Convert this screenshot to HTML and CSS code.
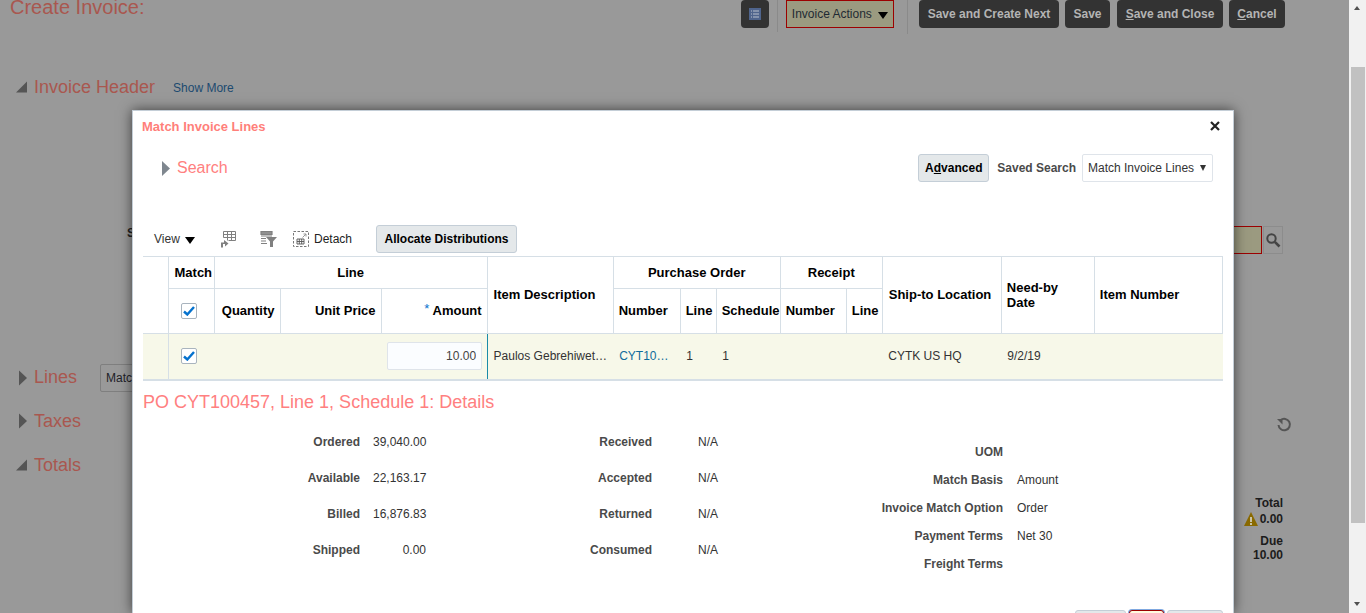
FILE: index.html
```html
<!DOCTYPE html>
<html lang="en">
<head>
  <meta charset="UTF-8">
  <meta name="viewport" content="width=device-width, initial-scale=1.0">
  <title>Create Invoice</title>
  <link rel="stylesheet" href="styles.css">
</head>
<body>
  <div class="page">
    <div class="page-bar">
      <h1 class="page-title">Create Invoice:</h1>
      <button class="dark-btn icon-btn" aria-label="Views">
        <svg width="12" height="12" viewBox="0 0 12 12"><rect width="12" height="12" fill="#4f648c"/><path d="M2 3h1M4 3h6M2 6h1M4 6h6M2 9h1M4 9h6" stroke="#b9c0cc" stroke-width="1.2"/></svg>
      </button>
      <span class="bar-sep"></span>
      <button class="actions-btn">Invoice Actions <span class="caret"></span></button>
      <span class="bar-sep sep-wide"></span>
      <button class="dark-btn btn-next">Save and Create Next</button>
      <button class="dark-btn btn-save">Save</button>
      <button class="dark-btn btn-close"><u>S</u>ave and Close</button>
      <button class="dark-btn btn-cancel"><u>C</u>ancel</button>
    </div>

    <div class="section-head head-invoice">
      <svg class="tri" width="24" height="12" viewBox="0 0 24 12"><path d="M6 11.500L17 11.500V0.500Z" fill="#555"/></svg>
      <h2>Invoice Header</h2>
      <a class="show-more">Show More</a>
    </div>

    <div class="search-row">
      <strong class="search-label">S</strong>
      <div class="search-field">
        <span class="search-input"></span>
        <span class="search-btn">
          <svg width="16" height="16" viewBox="0 0 16 16"><circle cx="6.500" cy="6.500" r="4.200" fill="none" stroke="#444" stroke-width="2"/><path d="M9.800 9.800L14.500 14.500" stroke="#444" stroke-width="2.600"/></svg>
        </span>
      </div>
    </div>

    <div class="section-head head-lines">
      <svg class="tri" width="24" height="16" viewBox="0 0 24 16"><path d="M9 0.500L17 8L9 15.500Z" fill="#555"/></svg>
      <h2>Lines</h2>
      <button class="match-btn">Match</button>
    </div>

    <div class="section-head head-taxes">
      <svg class="tri" width="24" height="16" viewBox="0 0 24 16"><path d="M9 0.500L17 8L9 15.500Z" fill="#555"/></svg>
      <h2>Taxes</h2>
      <svg class="refresh" width="16" height="16" viewBox="0 0 16 16"><path d="M4.500 4.200A5.700 5.700 0 1 1 2.500 9" fill="none" stroke="#555" stroke-width="2"/><path d="M1 3H6.500V8.600Z" fill="#555"/></svg>
    </div>

    <div class="section-head head-totals">
      <svg class="tri" width="24" height="12" viewBox="0 0 24 12"><path d="M6 11.500L17 11.500V0.500Z" fill="#555"/></svg>
      <h2>Totals</h2>
    </div>

    <div class="summary">
      <div class="summary-total">
        <div>Total</div>
        <div class="summary-warn">
          <svg width="14" height="14" viewBox="0 0 14 14"><path d="M7 0L14 14H0Z" fill="#8a6a00"/><path d="M7 5v5M7 11v2" stroke="#c9c4a8" stroke-width="2"/></svg>
          0.00
        </div>
      </div>
      <div class="summary-due">
        <div>Due</div>
        <div>10.00</div>
      </div>
    </div>
  </div>

  <div class="scrollbar">
    <span class="arrow-up"></span>
    <span class="thumb"></span>
    <span class="arrow-down"></span>
  </div>

  <div class="dialog">
    <div class="dialog-title">
      <span class="dialog-name">Match Invoice Lines</span>
      <svg width="10" height="10" viewBox="0 0 10 10"><path d="M1 1L9 9M9 1L1 9" stroke="#222" stroke-width="2.200"/></svg>
    </div>

    <div class="dlg-search">
      <svg width="8" height="15" viewBox="0 0 8 15"><path d="M0 0L8 7.500L0 15Z" fill="#7f878f"/></svg>
      <span class="dlg-search-title">Search</span>
      <button class="light-btn btn-advanced">A<u>d</u>vanced</button>
      <span class="saved-label">Saved Search</span>
      <span class="saved-select">Match Invoice Lines <span class="small-caret"></span></span>
    </div>

    <div class="table-bar">
      <span class="view-menu">View <span class="caret"></span></span>
      <svg class="tool tool-freeze" width="16" height="17" viewBox="0 0 16 17"><path d="M3.500 0.500h12v9h-7M3.500 0.500v6M3.500 3.500h12M3.500 6.500h12M7.500 0.500v9M11.500 0.500v9" fill="none" stroke="#808080" stroke-width="1"/><path d="M1 16.500v-5h3V9l4.500 3.500L5 15.500V13H3v3.500Z" fill="#808080"/></svg>
      <svg class="tool tool-filter" width="17" height="16" viewBox="0 0 17 16"><path d="M1 0.500h11v3H1ZM1 5h11M1 7.500h5M1 10h5M1 12.500h6" fill="#909090" stroke="#808080" stroke-width="1.200"/><path d="M6 6h11l-4 4.500V16h-3v-5.500Z" fill="#808080"/></svg>
      <svg class="tool tool-detach" width="16" height="16" viewBox="0 0 16 16"><rect x="0.500" y="0.500" width="15" height="15" fill="none" stroke="#777" stroke-dasharray="2.500 1.500"/><path d="M9.500 6.500L13 3M10.500 3H13V5.500" fill="none" stroke="#999"/><path d="M4 8h7v5H4ZM4 10.500h7M6.300 8v5M8.700 8v5" fill="none" stroke="#555" stroke-width="0.900"/></svg>
      <span class="detach-label">Detach</span>
      <button class="light-btn btn-allocate">Allocate Distributions</button>
    </div>

    <table class="lines">
      <colgroup>
        <col class="w25"><col class="w46"><col class="w66"><col class="w101"><col class="w106">
        <col class="w126"><col class="w67"><col class="w36"><col class="w64"><col class="w66">
        <col class="w36"><col class="w119"><col class="w93"><col class="w128">
      </colgroup>
      <thead>
        <tr class="row-top">
          <th rowspan="2" class="blank"></th>
          <th class="wide-pad">Match</th>
          <th colspan="3" class="center">Line</th>
          <th rowspan="2" class="left wide-pad">Item Description</th>
          <th colspan="3" class="center">Purchase Order</th>
          <th colspan="2" class="center">Receipt</th>
          <th rowspan="2" class="left wide-pad">Ship-to Location</th>
          <th rowspan="2" class="left">Need-by<br>Date</th>
          <th rowspan="2" class="left">Item Number</th>
        </tr>
        <tr class="row-sub">
          <th class="check-cell"><span class="check"><svg width="12" height="10" viewBox="0 0 12 10"><path d="M1 5.500L4.300 8.500L11 1" fill="none" stroke="#0572ce" stroke-width="2.400"/></svg></span></th>
          <th class="right">Quantity</th>
          <th class="right">Unit Price</th>
          <th class="right"><span class="req">*</span> Amount</th>
          <th class="left">Number</th>
          <th class="left">Line</th>
          <th class="left tight">Schedule</th>
          <th class="left">Number</th>
          <th class="left">Line</th>
        </tr>
      </thead>
      <tbody>
        <tr class="row-data">
          <td></td>
          <td class="check-cell"><span class="check"><svg width="12" height="10" viewBox="0 0 12 10"><path d="M1 5.500L4.300 8.500L11 1" fill="none" stroke="#0572ce" stroke-width="2.400"/></svg></span></td>
          <td></td>
          <td></td>
          <td class="amount-cell"><input class="amount" type="text" value="10.00"></td>
          <td>Paulos Gebrehiwet…</td>
          <td class="link">CYT10…</td>
          <td>1</td>
          <td>1</td>
          <td></td>
          <td></td>
          <td>CYTK US HQ</td>
          <td>9/2/19</td>
          <td></td>
        </tr>
      </tbody>
    </table>

    <h3 class="detail-title">PO CYT100457, Line 1, Schedule 1: Details</h3>

    <div class="details">
      <div class="detail-group group-qty">
        <b>Ordered</b><span>39,040.00</span>
        <b>Available</b><span>22,163.17</span>
        <b>Billed</b><span>16,876.83</span>
        <b>Shipped</b><span>0.00</span>
      </div>
      <div class="detail-group group-recv">
        <b>Received</b><span>N/A</span>
        <b>Accepted</b><span>N/A</span>
        <b>Returned</b><span>N/A</span>
        <b>Consumed</b><span>N/A</span>
      </div>
      <div class="detail-group group-terms">
        <b>UOM</b><span></span>
        <b>Match Basis</b><span>Amount</span>
        <b>Invoice Match Option</b><span>Order</span>
        <b>Payment Terms</b><span>Net 30</span>
        <b>Freight Terms</b><span></span>
      </div>
    </div>

    <div class="dialog-foot">
      <button class="light-btn foot-apply" aria-label="Apply"></button>
      <button class="foot-ok" aria-label="OK"></button>
      <button class="light-btn foot-cancel" aria-label="Cancel"></button>
    </div>
  </div>
</body>
</html>
```

FILE: styles.css
```css
* {
  box-sizing: border-box;
}
html, body {
  height: 613px;
  overflow: hidden;
}
body {
  margin: 0;
  font-family: "Liberation Sans", Arial, sans-serif;
  font-size: 12px;
  color: #333;
  background-color: #999;
}
button {
  font-family: inherit;
  font-size: 12px;
  padding: 0;
  cursor: pointer;
}
h1, h2, h3 {
  margin: 0;
  font-weight: normal;
}

/* page behind the dialog */
.page {
  width: 1349px;
  height: 613px;
  padding: 0 64px 0 10px;
  overflow: hidden;
}
.page-bar {
  display: flex;
  align-items: flex-start;
  height: 28px;
}
.page-title {
  flex: 1;
  margin-top: -7px;
  font-size: 20px;
  line-height: 28px;
  color: #a9574f;
}
.dark-btn {
  height: 28px;
  padding: 0;
  border: 0;
  border-radius: 4px;
  background-color: #333;
  color: #b4b4b4;
  font-weight: bold;
  white-space: nowrap;
}
.icon-btn {
  display: flex;
  align-items: center;
  justify-content: center;
  width: 28px;
}
.bar-sep {
  width: 1px;
  height: 32px;
  margin: 0 8px;
  background-color: #8a8a8a;
}
.sep-wide {
  height: 34px;
  margin: 0 11px 0 13px;
}
.actions-btn {
  width: 108px;
  height: 28px;
  border: 1px solid #9c0000;
  background-color: #9b9a80;
  color: #1f2a33;
  white-space: nowrap;
}
.caret {
  display: inline-block;
  margin-left: 3px;
  border-top: 7px solid #000;
  border-left: 5px solid transparent;
  border-right: 5px solid transparent;
  vertical-align: -1px;
}
.btn-next {
  width: 140px;
}
.btn-save {
  width: 45px;
  margin-left: 6px;
}
.btn-close {
  width: 106px;
  margin-left: 7px;
}
.btn-cancel {
  width: 56px;
  margin-left: 6px;
}

.section-head {
  display: flex;
  align-items: center;
  height: 28px;
}
.section-head h2 {
  font-size: 18px;
  color: #a9574f;
}
.tri {
  flex: none;
}
.head-invoice {
  margin-top: 45px;
}
.show-more {
  margin: 2px 0 0 18px;
  color: #1c4a70;
}
.search-row {
  display: flex;
  justify-content: space-between;
  height: 28px;
  margin-top: 125px;
  padding-left: 117px;
  color: #222;
}
.search-field {
  display: flex;
  margin-right: 2px;
}
.search-input {
  width: 162px;
  height: 28px;
  border: 1px solid #9c0000;
  background-color: #9b9a80;
}
.search-btn {
  display: flex;
  align-items: center;
  justify-content: center;
  width: 20px;
  height: 28px;
  margin-left: 1px;
  border: 1px solid #8c8c8c;
}
.head-lines {
  margin-top: 110px;
}
.section-head.head-lines h2 {
  margin-top: -2px;
}
.match-btn {
  width: 60px;
  height: 28px;
  margin-left: 23px;
  padding-left: 5px;
  border: 1px solid #7f7f7f;
  border-radius: 2px;
  background: transparent;
  color: #1e2228;
  text-align: left;
}
.head-taxes {
  margin-top: 15px;
}
.refresh {
  margin-left: auto;
  margin-right: -7px;
  margin-top: 6px;
}
.head-totals {
  margin-top: 16px;
}
.summary {
  margin-top: 16px;
  margin-right: 2px;
  font-weight: bold;
  text-align: right;
  color: #1c1c1c;
}
.summary-total {
  line-height: 16px;
}
.summary-warn {
  display: flex;
  align-items: center;
  justify-content: flex-end;
  gap: 2px;
}
.summary-due {
  margin-top: 7px;
  line-height: 14px;
}

/* browser scrollbar */
.scrollbar {
  position: absolute;
  top: 0;
  right: 0;
  width: 17px;
  height: 613px;
  background-color: #f1f1f1;
}
.thumb {
  position: absolute;
  top: 67px;
  left: 2px;
  width: 14px;
  height: 456px;
  background-color: #c1c1c1;
}
.arrow-up, .arrow-down {
  position: absolute;
  left: 5px;
  border-left: 3.500px solid transparent;
  border-right: 3.500px solid transparent;
}
.arrow-up {
  top: 6px;
  border-bottom: 4px solid #505050;
}
.arrow-down {
  top: 602px;
  border-top: 4px solid #505050;
}

/* dialog */
.dialog {
  position: absolute;
  top: 110px;
  left: 132px;
  width: 1102px;
  height: 503px;
  overflow: hidden;
  padding: 0 10px;
  border: 1px solid #c4ced7;
  border-bottom: 0;
  background-color: #fff;
  box-shadow: 0 0 12px 0 rgba(0, 0, 0, 0.6);
}
.dialog-title {
  display: flex;
  align-items: center;
  justify-content: space-between;
  height: 30px;
  padding-right: 3px;
  font-size: 13px;
  font-weight: bold;
  color: #ff7f7a;
}
.dialog-name {
  margin-left: -1px;
}
.dlg-search {
  display: flex;
  align-items: center;
  height: 28px;
  margin-top: 13px;
  padding: 0 10px 0 19px;
}
.dlg-search-title {
  flex: 1;
  margin-left: 7px;
  font-size: 16px;
  color: #ff8080;
}
.light-btn {
  height: 28px;
  border: 1px solid #c4ced7;
  border-radius: 3px;
  background-color: #e4e8ea;
  color: #000;
  font-weight: bold;
}
.btn-advanced {
  width: 71px;
}
.saved-label {
  margin-left: 8px;
  font-weight: bold;
  color: #4a4a4a;
}
.saved-select {
  display: flex;
  align-items: center;
  justify-content: space-between;
  width: 131px;
  height: 28px;
  margin-left: 6px;
  padding: 0 6px 0 5px;
  border: 1px solid #dfe4ea;
  border-radius: 2px;
  color: #333;
  white-space: nowrap;
}
.small-caret {
  border-top: 6px solid #333;
  border-left: 3.500px solid transparent;
  border-right: 3.500px solid transparent;
}

.table-bar {
  display: flex;
  align-items: center;
  height: 28px;
  margin-top: 43px;
  padding-left: 11px;
}
.view-menu {
  width: 66px;
  color: #333;
}
.view-menu .caret {
  margin-left: 2px;
}
.tool-filter {
  margin-left: 24px;
}
.tool-detach {
  margin-left: 16px;
}
.detach-label {
  margin-left: 5px;
  color: #222;
}
.btn-allocate {
  width: 141px;
  margin-left: 24px;
}

.lines {
  width: 1080px;
  margin-top: 3px;
  border-collapse: collapse;
  table-layout: fixed;
}
.w25 { width: 25px; }
.w46 { width: 46px; }
.w66 { width: 66px; }
.w101 { width: 101px; }
.w106 { width: 106px; }
.w126 { width: 126px; }
.w67 { width: 67px; }
.w36 { width: 36px; }
.w64 { width: 64px; }
.w93 { width: 93px; }
.w119 { width: 119px; }
.w128 { width: 128px; }
.lines th {
  padding: 0 5px;
  border: 1px solid #d6dfe6;
  font-size: 13px;
  font-weight: bold;
  color: #000;
  line-height: 15px;
  white-space: nowrap;
}
.lines th.blank {
  border-left: 0;
}
.lines th.tight {
  padding: 0 0 2px 5px;
}
.lines th.wide-pad {
  padding-left: 6px;
}
.lines .row-top .left {
  padding-bottom: 1px;
}
.lines .row-sub .left, .lines .row-sub .right {
  padding-bottom: 2px;
}
.row-top {
  height: 32px;
}
.row-sub {
  height: 45px;
}
.row-data {
  height: 46px;
  background-color: #f7f8e9;
}
.lines td {
  padding: 0 5px 0 6px;
  border-bottom: 2px solid #d6dfe6;
  color: #333;
  white-space: nowrap;
}
.lines td:first-child {
  border-right: 1px solid #d6dfe6;
}
.lines .center {
  text-align: center;
}
.lines .left {
  text-align: left;
}
.lines .right {
  text-align: right;
}
.lines .check-cell {
  padding: 0 0 0 12px;
  text-align: left;
}
.lines .amount-cell {
  border-right: 1px solid #1a8ba8;
}
.req {
  color: #0572ce;
  font-weight: normal;
  line-height: 0;
  vertical-align: 2px;
}
.check {
  display: inline-flex;
  align-items: center;
  justify-content: center;
  width: 16px;
  height: 16px;
  border: 1px solid #a9b4be;
  border-radius: 2px;
  background-color: #fff;
  vertical-align: middle;
}
.amount {
  display: block;
  width: 95px;
  height: 28px;
  padding: 0 5px;
  border: 1px solid #dfe4ea;
  border-radius: 2px;
  background-color: #fbfdff;
  font-family: inherit;
  font-size: 12px;
  color: #444;
  text-align: right;
}
.lines .link {
  color: #0f6b9b;
}

.detail-title {
  height: 24px;
  margin-top: 9px;
  font-size: 18px;
  line-height: 24px;
  color: #ff8080;
}
.details {
  display: flex;
  align-items: flex-start;
  margin-top: 10px;
}
.detail-group {
  display: grid;
  align-items: center;
}
.detail-group b {
  text-align: right;
  color: #4a4a4a;
}
.group-qty {
  grid-template-columns: 217px 53px;
  grid-auto-rows: 36px;
  column-gap: 13px;
}
.group-qty span {
  text-align: right;
}
.group-recv {
  grid-template-columns: 152px 60px;
  grid-auto-rows: 36px;
  column-gap: 46px;
  margin-left: 74px;
}
.group-terms {
  grid-template-columns: 143px 120px;
  grid-auto-rows: 28px;
  column-gap: 14px;
  margin-top: 14px;
  margin-left: 102px;
}
.dialog-foot {
  display: flex;
  justify-content: flex-end;
  gap: 3px;
  margin-top: 32px;
}
.foot-apply {
  width: 51px;
}
.foot-ok {
  width: 35px;
  height: 28px;
  border: 1px solid #9c0000;
  border-radius: 3px;
  box-shadow: 0 0 0 1px #7fa8e0;
  background-color: #fffbe0;
}
.foot-cancel {
  width: 56px;
}
```
